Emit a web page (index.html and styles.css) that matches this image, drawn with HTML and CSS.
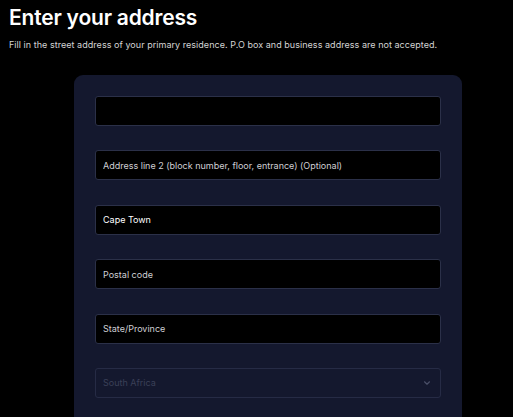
FILE: index.html
```html
<!DOCTYPE html>
<html lang="en">
<head>
<meta charset="utf-8">
<link rel="stylesheet" href="styles.css">
</head>
<body>
<header class="head">
  <h1 class="title">Enter your address</h1>
  <p class="lead">Fill in the street address of your primary residence. P.O box and business address are not accepted.</p>
</header>
<main class="card">
  <div class="field"><input class="input" type="text" value=""></div>
  <div class="field"><input class="input" type="text" placeholder="Address line 2 (block number, floor, entrance) (Optional)"></div>
  <div class="field"><input class="input filled" type="text" value="Cape Town"></div>
  <div class="field"><input class="input" type="text" placeholder="Postal code"></div>
  <div class="field"><input class="input" type="text" placeholder="State/Province"></div>
  <div class="field select">
    <span class="select-text">South Africa</span>
    <svg class="chev" width="8" height="6" viewBox="0 0 8 6"><path d="M1.5 1.8 L4 4.2 L6.5 1.8" fill="none" stroke="#4a4f68" stroke-width="1.2" stroke-linecap="round" stroke-linejoin="round"/></svg>
  </div>
</main>
</body>
</html>
```
FILE: styles.css
```css
html, body {
  margin: 0;
  background: #000;
  color: #fff;
  font-family: Inter, "Noto Sans", sans-serif;
  overflow: hidden;
}
.head {
  padding: 4px 9px 0;
}
.title {
  margin: 0;
  font-size: 21px;
  font-weight: 600;
  line-height: 27px;
  letter-spacing: -0.2px;
}
.lead {
  margin: 8px 0 0;
  font-size: 9px;
  line-height: 12px;
  color: #d4d4d4;
  letter-spacing: 0.04px;
}
.card {
  margin: 24px 0 0 74px;
  width: 388px;
  box-sizing: border-box;
  background: #14182e;
  border-radius: 9px;
  padding: 21px 21px 30px 21px;
  display: flex;
  flex-direction: column;
  gap: 24.4px;
}
.field {
  height: 30px;
}
.input {
  width: 100%;
  height: 30px;
  box-sizing: border-box;
  background: #000;
  border: 1px solid #2b3048;
  border-radius: 3px;
  padding: 0 7px;
  color: #fff;
  font-family: Inter, "Noto Sans", sans-serif;
  font-size: 9px;
  outline: none;
}
.input::placeholder {
  color: #cfcfd4;
  opacity: 1;
}
.select {
  box-sizing: border-box;
  border: 1px solid #262b45;
  border-radius: 3px;
  display: flex;
  align-items: center;
  justify-content: space-between;
  padding: 0 9px 0 7px;
}
.select-text {
  font-size: 9px;
  color: #3b4058;
}
.chev {
  display: block;
}
```
